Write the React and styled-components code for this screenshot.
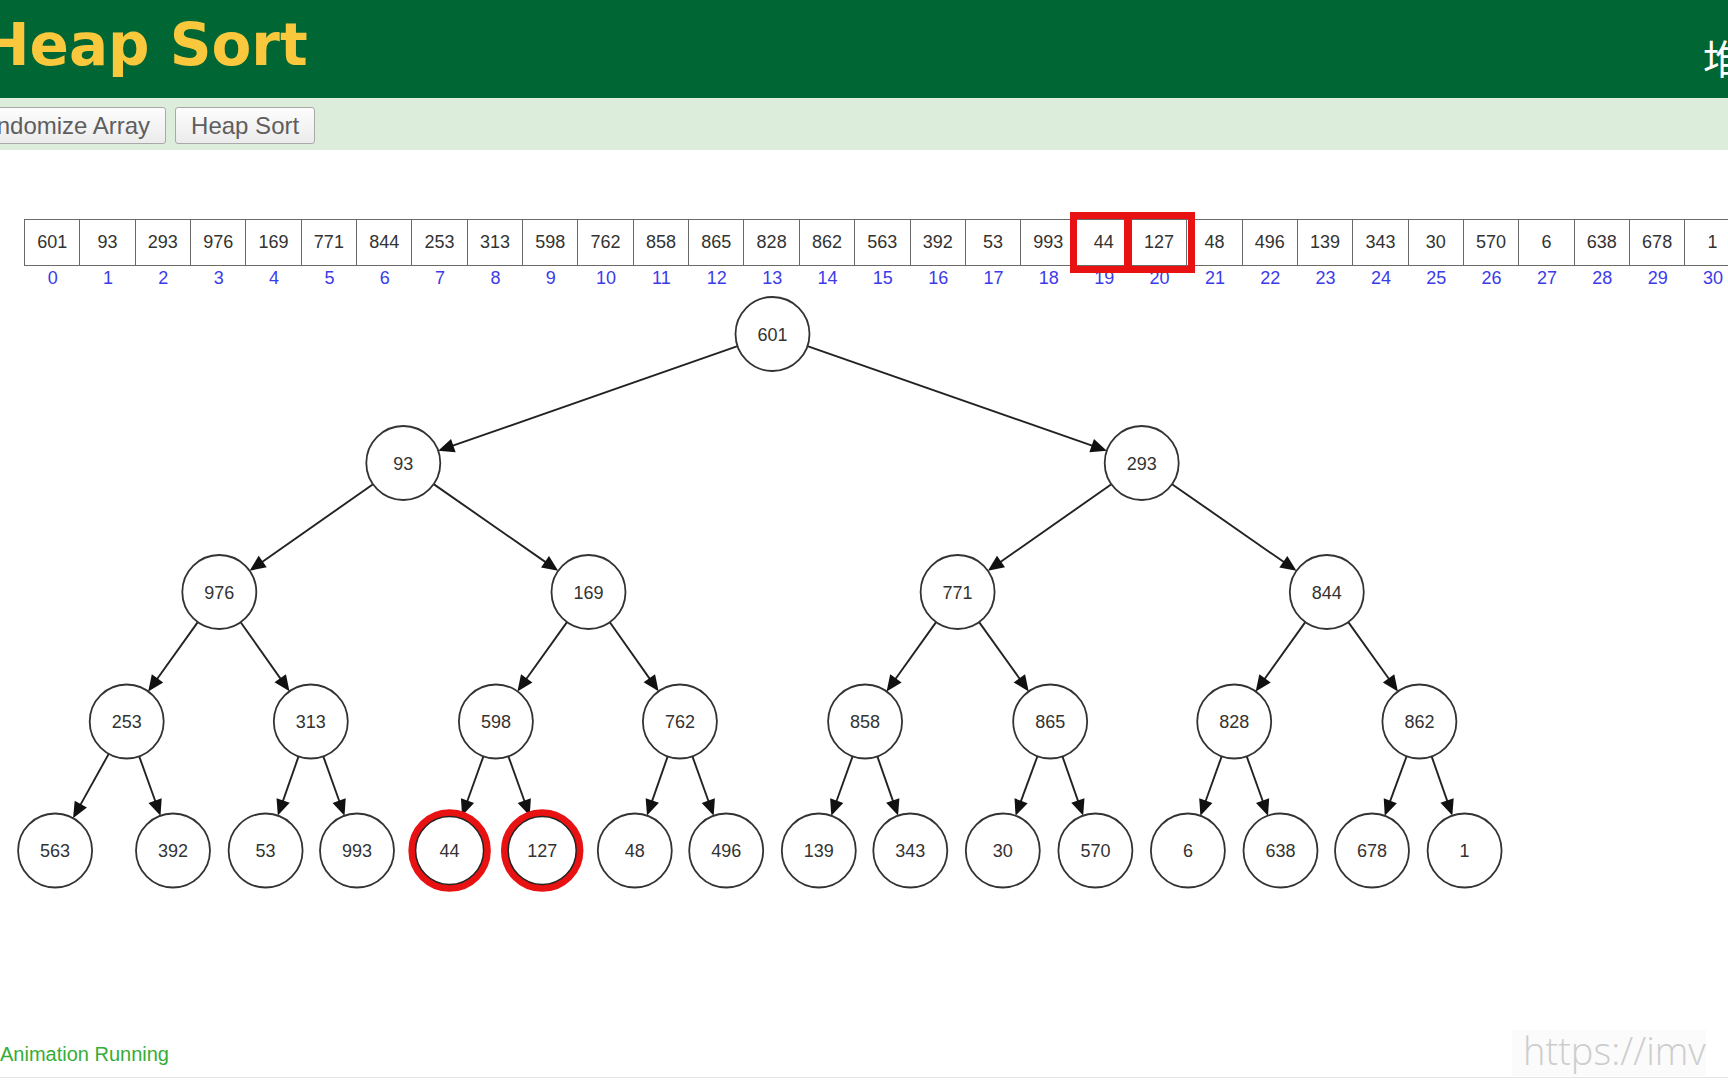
import React from "react";
import styled, { createGlobalStyle, css } from "styled-components";

const GlobalStyle = createGlobalStyle`
  html, body { margin: 0; padding: 0; background: #fff; overflow: hidden; }
  #root { width: 1728px; height: 1080px; }
`;

const Page = styled.div`
  position: relative;
  width: 1728px;
  height: 1080px;
  display: flex;
  flex-direction: column;
  overflow: hidden;
  background: #fff;
  font-family: "Liberation Sans", Arial, sans-serif;
`;

const Header = styled.header`
  flex: none;
  height: 98px;
  box-sizing: border-box;
  padding-top: 16px;
  background: #006633;
  display: flex;
  align-items: flex-start;
  overflow: hidden;
`;

const Title = styled.h1`
  margin: 0 0 0 -19px;
  font: bold 58px/58px "DejaVu Sans", Verdana, sans-serif;
  color: #fac83c;
  white-space: nowrap;
`;

const Subtitle = styled.div`
  flex: none;
  width: 25px;
  margin: 21px 0 0 auto;
  white-space: nowrap;
  font: 40px/40px "Noto Sans CJK SC", sans-serif;
  color: #fff;
`;

const Toolbar = styled.div`
  flex: none;
  height: 52px;
  box-sizing: border-box;
  padding-top: 9px;
  background: #ddeddc;
  display: flex;
  align-items: flex-start;
  gap: 9px;
  overflow: hidden;
`;

const Button = styled.button`
  flex: none;
  height: 37px;
  margin-left: ${(p) => p.$offset || 0}px;
  padding: 0 15px;
  font: 24px "Liberation Sans", Arial, sans-serif;
  color: #5e5e5e;
  background: linear-gradient(#fdfdfd, #ebebeb);
  border: 1px solid #a9a9a9;
  border-radius: 3px;
  white-space: nowrap;
`;

const Main = styled.main`
  flex: 1;
  min-height: 0;
  padding-top: 69px;
  overflow: hidden;
`;

const ArrayRow = styled.div`
  display: grid;
  grid-template-columns: repeat(31, 55.35px);
  width: max-content;
  margin-left: 24px;
  border-left: 1px solid #6a6a6a;
`;

const Cell = styled.div`
  position: relative;
  height: 47px;
  box-sizing: border-box;
  border: 1px solid #6a6a6a;
  border-left: none;
  display: flex;
  align-items: center;
  justify-content: center;
  font: 18px "Liberation Sans", Arial, sans-serif;
  color: #333;
  ${(p) =>
    p.$hl &&
    css`
      &::after {
        content: "";
        position: absolute;
        left: ${p.$hl.l}px;
        right: ${p.$hl.r}px;
        top: -8px;
        bottom: -8px;
        border: 7px solid #e81212;
        z-index: ${p.$hl.z};
      }
    `}
`;

const IndexRow = styled.div`
  display: grid;
  grid-template-columns: repeat(31, 55.35px);
  width: max-content;
  margin-left: 25px;
`;

const Index = styled.div`
  height: 24px;
  text-align: center;
  font: 18px/24px "Liberation Sans", Arial, sans-serif;
  color: #3b3bea;
`;

const TreeSvg = styled.svg`
  display: block;
  width: 1728px;
  height: 610px;
`;

const NodeText = styled.text`
  font: 18px "Liberation Sans", Arial, sans-serif;
  fill: #333;
`;

const Footer = styled.footer`
  flex: none;
  height: 45px;
  margin-bottom: 2px;
  border-bottom: 1px solid #e4e4e4;
  display: flex;
  align-items: center;
`;

const Status = styled.span`
  font: 20px "Liberation Sans", Arial, sans-serif;
  color: #36ad36;
`;

const Watermark = styled.div`
  position: absolute;
  left: 1512px;
  top: 1030px;
  padding-left: 11px;
  height: 46px;
  background: #fbfbfb;
  font: 300 38px/40px "Open Sans", "DejaVu Sans", sans-serif;
  color: #cdcdcd;
  white-space: nowrap;
`;

const values = [601, 93, 293, 976, 169, 771, 844, 253, 313, 598, 762, 858, 865, 828, 862, 563, 392, 53, 993, 44, 127, 48, 496, 139, 343, 30, 570, 6, 638, 678, 1];
const highlightBoxes = {
  19: { l: -7, r: 0, z: 1 },
  20: { l: -7, r: -9, z: 2 },
};
const highlighted = [19, 20];

const levelY = [44, 173, 302, 431.5, 560.5];
const levelX = [
  [772.5],
  [403.3, 1141.7],
  [219.3, 588.5, 957.6, 1326.8],
  [126.7, 310.8, 495.9, 679.9, 865.1, 1050.2, 1234.2, 1419.4],
  [55.1, 173.0, 265.6, 357.0, 449.6, 542.2, 634.8, 726.2, 818.8, 910.3, 1002.8, 1095.4, 1187.9, 1280.5, 1372.0, 1464.6],
];

const nodes = [];
levelX.forEach((xs, lv) => xs.forEach((x) => nodes.push({ x, y: levelY[lv] })));

const R = 37;
const AL = 16;
const AW = 14;

function Edge({ p, c }) {
  const dx = c.x - p.x;
  const dy = c.y - p.y;
  const len = Math.hypot(dx, dy);
  const ux = dx / len;
  const uy = dy / len;
  const sx = p.x + ux * R;
  const sy = p.y + uy * R;
  const tx = c.x - ux * R;
  const ty = c.y - uy * R;
  const bx = tx - ux * AL;
  const by = ty - uy * AL;
  const px = -uy * (AW / 2);
  const py = ux * (AW / 2);
  return (
    <g>
      <line x1={sx} y1={sy} x2={bx + ux * 2} y2={by + uy * 2} stroke="#222" strokeWidth="1.9" />
      <polygon points={`${tx},${ty} ${bx + px},${by + py} ${bx - px},${by - py}`} fill="#111" />
    </g>
  );
}

function Tree() {
  const edges = [];
  for (let i = 1; i < nodes.length; i++) {
    edges.push(<Edge key={i} p={nodes[Math.floor((i - 1) / 2)]} c={nodes[i]} />);
  }
  return (
    <TreeSvg viewBox="0 0 1728 610">
      {edges}
      {nodes.map((n, i) => {
        const hl = highlighted.includes(i);
        return (
          <g key={i}>
            {hl ? (
              <>
                <circle cx={n.x} cy={n.y} r={37.5} fill="#fff" stroke="#e81212" strokeWidth="7.5" />
                <circle cx={n.x} cy={n.y} r={34} fill="#fff" stroke="#222" strokeWidth="1.5" />
              </>
            ) : (
              <circle cx={n.x} cy={n.y} r={R} fill="#fff" stroke="#333" strokeWidth="1.8" />
            )}
            <NodeText x={n.x} y={n.y + 6.5} textAnchor="middle">
              {values[i]}
            </NodeText>
          </g>
        );
      })}
    </TreeSvg>
  );
}

export default function App() {
  return (
    <>
      <GlobalStyle />
      <Page>
        <Header>
          <Title>Heap Sort</Title>
          <Subtitle>堆排序</Subtitle>
        </Header>
        <Toolbar>
          <Button $offset={-50}>Randomize Array</Button>
          <Button>Heap Sort</Button>
        </Toolbar>
        <Main>
          <ArrayRow>
            {values.map((v, i) => (
              <Cell key={i} $hl={highlightBoxes[i]}>
                {v}
              </Cell>
            ))}
          </ArrayRow>
          <IndexRow>
            {values.map((v, i) => (
              <Index key={i}>{i}</Index>
            ))}
          </IndexRow>
          <Tree />
        </Main>
        <Footer>
          <Status>Animation Running</Status>
        </Footer>
        <Watermark>https://imv</Watermark>
      </Page>
    </>
  );
}
